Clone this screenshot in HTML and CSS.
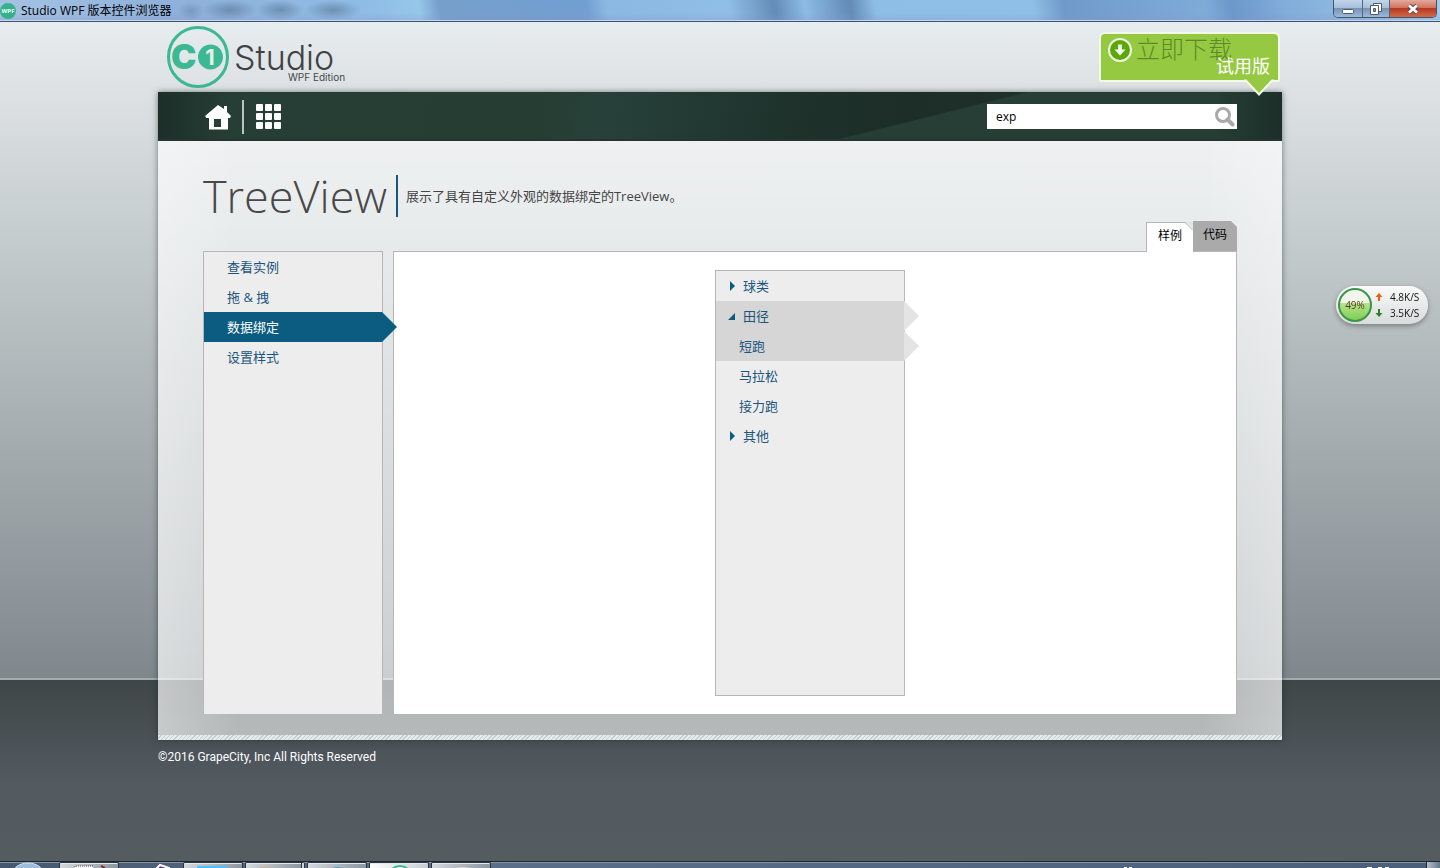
FILE: index.html
```html
<!DOCTYPE html>
<html lang="zh-CN">
<head>
<meta charset="utf-8">
<title>Studio WPF 版本控件浏览器</title>
<link rel="stylesheet" href="styles.css">
</head>
<body>
<div class="titlebar">
  <svg class="app-icon" viewBox="0 0 16 16" aria-hidden="true"><circle cx="8" cy="8" r="8" fill="#35b28a"/><text x="8" y="10" text-anchor="middle" class="app-icon-text">WPF</text></svg>
  <span class="window-title">Studio WPF 版本控件浏览器</span>
  <div class="window-controls">
    <button class="win-btn" aria-label="最小化"><svg width="14" height="14" viewBox="0 0 14 14"><rect x="1.500" y="7.500" width="11" height="4" rx="1" fill="#fff" stroke="#4d5a70"/></svg></button>
    <button class="win-btn win-restore" aria-label="还原"><svg width="14" height="14" viewBox="0 0 14 14"><path d="M4.500 1.500h8v8h-8z" fill="#fff" stroke="#4d5a70"/><path d="M1.500 3.500h8v9h-8z" fill="#fff" stroke="#4d5a70"/><path d="M4.500 6.500h2v3h-2z" fill="#7f9bc0" stroke="#4d5a70"/></svg></button>
    <button class="win-btn win-close" aria-label="关闭"><svg width="14" height="14" viewBox="0 0 14 14"><path d="M3 3.500l8 7M11 3.500l-8 7" stroke="#5c4650" stroke-width="4.800"/><path d="M3 3.500l8 7M11 3.500l-8 7" stroke="#fff" stroke-width="2.800"/></svg></button>
  </div>
</div>

<div class="stage">
  <header class="brand-row">
    <div class="brand">
      <svg class="brand-mark" width="64" height="64" viewBox="0 0 64 64" role="img" aria-label="C1">
        <circle cx="32" cy="32" r="29.500" fill="none" stroke="#3cb893" stroke-width="3"/>
        <circle cx="44.500" cy="32" r="12.500" fill="#3cb893"/>
        <text x="5" y="44" class="mark-c">C</text>
        <text x="44" y="40" text-anchor="middle" class="mark-one">1</text>
      </svg>
      <div class="brand-words">
        <span class="brand-name">Studio</span>
        <span class="brand-edition">WPF Edition</span>
      </div>
    </div>
    <a class="download" href="#">
      <svg class="download-icon" width="24" height="24" viewBox="0 0 24 24" aria-hidden="true"><circle cx="12" cy="12" r="11" fill="#5ca80a" stroke="#f1f9e2" stroke-width="2"/><path d="M10 6.500h4v5h3.500L12 17.500 6.500 11.500H10z" fill="#f4fbe8"/></svg>
      <span class="download-now">立即下载</span>
      <span class="download-trial">试用版</span>
      <svg class="download-tip" width="32" height="18" viewBox="0 0 32 18" aria-hidden="true"><path d="M1 0v1l2 0L16 15.500 29 1h2V0z" fill="#95c941"/><path d="M1 1.500h2L16 15.500 29 1.500h2" fill="none" stroke="#f3f9e8" stroke-width="2"/></svg>
    </a>
  </header>

  <div class="window-panel">
    <nav class="toolbar">
      <a class="tool-link home" href="#" aria-label="首页"><svg width="26" height="25" viewBox="0 0 26 25"><path d="M13 0L0 11l1.500 2H4v11.500h19V13h2l1-2-4-4V1h-3v3z" fill="#fff"/><path d="M9 14h7v8H9z" fill="#263e36"/></svg></a>
      <a class="tool-link" href="#" aria-label="所有控件"><svg width="25" height="25" viewBox="0 0 25 25" fill="#fff"><rect width="7" height="7" rx="1"/><rect x="9" width="7" height="7" rx="1"/><rect x="18" width="7" height="7" rx="1"/><rect y="9" width="7" height="7" rx="1"/><rect x="9" y="9" width="7" height="7" rx="1"/><rect x="18" y="9" width="7" height="7" rx="1"/><rect y="18" width="7" height="7" rx="1"/><rect x="9" y="18" width="7" height="7" rx="1"/><rect x="18" y="18" width="7" height="7" rx="1"/></svg></a>
      <form class="search">
        <input class="search-input" type="text" value="exp" aria-label="搜索">
        <button class="search-btn" type="button" aria-label="搜索"><svg width="20" height="20" viewBox="0 0 20 20" fill="none" stroke="#a9a9a9"><circle cx="8" cy="8" r="6.500" stroke-width="3"/><path d="M12.500 12.500l5 5" stroke-width="4" stroke-linecap="round"/></svg></button>
      </form>
    </nav>

    <main class="page">
      <div class="page-head">
        <h1 class="page-title">TreeView</h1>
        <p class="page-desc">展示了具有自定义外观的数据绑定的TreeView。</p>
        <div class="tabs">
          <button class="tab tab-active">样例<svg class="tab-cut" width="8" height="8" viewBox="0 0 8 8" aria-hidden="true"><path d="M0 0h8v8z" fill="#e3e6e7"/><path d="M0 .5l7.500 7.500" stroke="#b4b7b9"/></svg></button>
          <button class="tab tab-code">代码</button>
        </div>
      </div>
      <div class="columns">
        <ul class="side-list">
          <li><a class="side-link" href="#">查看实例</a></li>
          <li><a class="side-link" href="#">拖 &amp; 拽</a></li>
          <li><a class="side-link side-current" href="#">数据绑定</a></li>
          <li><a class="side-link" href="#">设置样式</a></li>
        </ul>
        <section class="sample">
          <ul class="tree">
            <li><button class="node"><svg class="node-arrow" width="8" height="10" viewBox="0 0 8 10"><path d="M2 0l5 5-5 5z" fill="#0b5c80"/></svg>球类</button></li>
            <li><button class="node node-on"><svg class="node-arrow" width="8" height="10" viewBox="0 0 8 10"><path d="M7 2v7H0z" fill="#0b5c80"/></svg>田径</button></li>
            <li><button class="node node-child node-on">短跑</button></li>
            <li><button class="node node-child">马拉松</button></li>
            <li><button class="node node-child">接力跑</button></li>
            <li><button class="node"><svg class="node-arrow" width="8" height="10" viewBox="0 0 8 10"><path d="M2 0l5 5-5 5z" fill="#0b5c80"/></svg>其他</button></li>
          </ul>
        </section>
      </div>
    </main>
  </div>

  <footer class="copyright">©2016 GrapeCity, Inc All Rights Reserved</footer>
</div>

<div class="taskbar">
  <svg class="orb" width="32" height="7" viewBox="0 0 32 7" aria-hidden="true"><ellipse cx="16" cy="15" rx="17" ry="14" fill="#9dbddb" stroke="#d5e3f0"/></svg>
  <div class="task"><svg width="60" height="6" viewBox="0 0 60 6"><path d="M15 6V3h18l2 3" fill="#f4f4f4" stroke="#555" stroke-dasharray="1 1"/><path d="M41 3l4 2" stroke="#8a3030" stroke-width="2"/></svg></div>
  <div class="task task-plain"><svg width="60" height="6" viewBox="0 0 60 6"><path d="M33 7l5-5 9 3v2" fill="#6a3584" stroke="#fff" stroke-width="2"/></svg></div>
  <div class="task"><svg width="60" height="6" viewBox="0 0 60 6"><rect x="13" y="3" width="31" height="5" rx="1" fill="#4fc0ff"/></svg></div>
  <div class="task task-stack"><svg width="60" height="6" viewBox="0 0 60 6"><path d="M14 5h12" stroke="#c9b48a" stroke-width="2"/></svg></div>
  <div class="task"><svg width="60" height="6" viewBox="0 0 60 6"><path d="M22 7q2-3 8-3l5 1v2" fill="#419fd8"/></svg></div>
  <div class="task task-current"><svg width="60" height="6" viewBox="0 0 60 6"><circle cx="30" cy="15" r="12" fill="#f4f7f6" stroke="#3cb893" stroke-width="2"/></svg></div>
  <div class="task"><svg width="60" height="6" viewBox="0 0 60 6"><path d="M23 6l8-1 8 1" fill="none" stroke="#e2dcd4" stroke-width="2"/></svg></div>
  <svg class="tray" width="300" height="7" viewBox="0 0 300 7" aria-hidden="true"><path d="M0 6h3M5 6h3M243 6h5M254 6h4M261 6h4" stroke="#fff" stroke-width="2"/></svg>
  <button class="show-desktop" aria-label="显示桌面"></button>
</div>

<aside class="net-meter">
  <div class="meter-ball">49%</div>
  <div class="meter-rates">
    <div class="rate"><svg width="8" height="8" viewBox="0 0 8 8"><path d="M4 0l3.500 4H5v4H3V4H.5z" fill="#e8611a"/></svg>4.8K/S</div>
    <div class="rate"><svg width="8" height="8" viewBox="0 0 8 8"><path d="M4 8L.5 4H3V0h2v4h2.500z" fill="#27802d"/></svg>3.5K/S</div>
  </div>
</aside>
</body>
</html>
```
FILE: styles.css
```css
* { box-sizing: border-box; }

body {
  margin: 0;
  min-height: 100vh;
  display: flex;
  flex-direction: column;
  font-family: "Open Sans", "Noto Sans CJK SC", sans-serif;
  font-size: 13px;
  color: #444;
}

ul { list-style: none; margin: 0; padding: 0; }
a { text-decoration: none; color: inherit; }
button { font: inherit; color: inherit; border: 0; background: none; padding: 0; cursor: pointer; }
svg { display: block; flex: none; }

/* Window title bar */
.titlebar {
  height: 22px;
  display: flex;
  align-items: center;
  gap: 5px;
  border-bottom: 1px solid #3c5375;
  box-shadow: inset 0 -1px #c3d7ec;
  background:
    radial-gradient(ellipse 13px 9px at 191px 11px, rgba(70, 95, 130, .3), transparent),
    radial-gradient(ellipse 28px 10px at 230px 10px, rgba(60, 80, 110, .4), transparent),
    radial-gradient(ellipse 24px 10px at 280px 10px, rgba(60, 80, 110, .4), transparent),
    radial-gradient(ellipse 28px 10px at 333px 10px, rgba(60, 80, 110, .4), transparent),
    linear-gradient(to bottom, transparent 60%, rgba(140, 150, 190, .3)),
    linear-gradient(80deg, #a5c3e4 0, #8eb0da 170px, #8fbde5 370px, #96c8ea 415px, #769fcb 435px, #719fd2 580px, #8bb8e2 600px, #8fbee6 720px, #638cb7 765px, #8cbbe5 795px, #628bb6 840px, #8ebee6 865px, #8fbfe7 1020px, #6f9aca 1050px, #7fabd9 1190px, #6b97ca 1215px, #82addb 1270px, #8db9e0 1330px, #a3cbea 100%);
}
.app-icon { width: 16px; height: 16px; }
.app-icon-text { font: 700 6px "Open Sans", sans-serif; fill: #fff; }
.window-title { font-size: 12px; line-height: 20px; color: #000; }
.window-controls {
  align-self: flex-start;
  display: flex;
  margin-left: auto;
  margin-right: 3px;
  height: 18px;
  border: 1px solid #43536b;
  border-top: 0;
  border-radius: 0 0 5px 5px;
  overflow: hidden;
}
.win-btn {
  width: 28px;
  display: grid;
  place-items: center;
  background: linear-gradient(#c3d6ea, #a5bfdc 45%, #7893b4 50%, #9db9d8);
}
.win-restore { width: 27px; border-left: 1px solid #53657f; }
.win-close { width: 47px; border-left: 1px solid #53657f; background: linear-gradient(#e4aa9c, #d2745f 45%, #b83920 50%, #cf6a4c); }

/* Backdrop with a horizon line near the bottom */
.stage {
  flex: 1;
  display: flex;
  flex-direction: column;
  padding: 0 158px;
  background: linear-gradient(to bottom,
    #e7ecee 0, #dde1e3 70px, #c9d0d2 190px, #b3babc 330px,
    #868e94 calc(100% - 220px), #7f878b calc(100% - 183px),
    #a4acaf calc(100% - 183px), #a4acaf calc(100% - 181px),
    #3e4647 calc(100% - 181px), #454d4e calc(100% - 146px),
    #4b5359 calc(100% - 115px), #535b62 calc(100% - 75px), #545c60 100%);
}

.brand-row {
  height: 70px;
  display: flex;
  justify-content: space-between;
  align-items: flex-start;
  padding: 3px 2px 0 8px;
}
.brand { display: flex; gap: 4px; }
.brand-words { display: flex; flex-direction: column; padding-top: 16px; }
.brand-name { font: 300 34px/34px Inter, sans-serif; color: #3f4245; }
.brand-edition { font: 400 10px/10px Inter, sans-serif; color: #45484b; padding-left: 54px; margin-top: -3px; }
.mark-c { font: 900 34px Inter, sans-serif; fill: #3cb893; }
.mark-one { font: 700 22px Inter, sans-serif; fill: #e2f0ec; }

.download {
  position: relative;
  width: 181px;
  height: 50px;
  margin-top: 7px;
  display: flex;
  align-items: flex-start;
  gap: 4px;
  padding: 3px 7px;
  border: 2px solid #f3f9e8;
  border-radius: 6px 6px 2px 2px;
  background: #95c941;
}
.download-icon { margin-top: 1px; }
.download-now { font-family: "Noto Sans CJK SC", sans-serif; font-size: 24px; font-weight: 300; line-height: 22px; color: #5d8a26; }
.download-trial { position: absolute; right: 8px; bottom: 2px; font-size: 18px; line-height: 24px; color: #fff; }
.download-tip { position: absolute; right: 3px; top: 45px; }

/* Main translucent panel */
.window-panel {
  flex: 1;
  display: flex;
  flex-direction: column;
  box-shadow: 0 0 6px rgba(20, 40, 35, .55);
}
.toolbar {
  height: 49px;
  display: flex;
  align-items: center;
  padding: 0 45px;
  box-shadow: inset 0 -2px #26332f;
  background:
    linear-gradient(to right, rgba(24, 40, 35, .7), transparent 70px, transparent calc(100% - 70px), rgba(24, 40, 35, .7)),
    linear-gradient(166deg, transparent 210px, #263e36 211px),
    linear-gradient(100deg, #263e36 0, #263d33 380px, #27413a 440px, #1e312b 640px, #1d2d28 750px, #20332d 900px);
}
.tool-link { display: block; }
.home { padding: 5px 11px 4px 2px; margin-right: 12px; border-right: 2px solid #b9c4c0; }
.search { display: flex; align-items: center; width: 250px; height: 25px; margin-left: auto; background: #fff; }
.search-input { flex: 1; min-width: 0; border: 0; outline: 0; padding: 0 9px; background: none; font: inherit; font-size: 12px; color: #000; }
.search-btn { padding-right: 2px; }

.page {
  flex: 1;
  display: flex;
  flex-direction: column;
  padding: 0 45px 26px;
  background:
    repeating-linear-gradient(135deg, #e6ebed 0, #e6ebed 2px, #c6cdd0 2px, #c6cdd0 3px) bottom / 100% 5px no-repeat,
    linear-gradient(to right, rgba(255, 255, 255, .25), transparent 80px, transparent calc(100% - 80px), rgba(255, 255, 255, .25)),
    rgba(255, 255, 255, .6);
}
.page-head { height: 110px; display: flex; align-items: center; }
.page-title {
  margin: 0;
  padding-right: 9px;
  border-right: 2px solid #1c557c;
  font-size: 45px;
  line-height: 42px;
  font-weight: 300;
  color: #484848;
}
.page-desc { margin: 0; padding-left: 8px; line-height: 20px; }
.tabs { align-self: flex-end; display: flex; align-items: flex-end; margin-left: auto; }
.tab { height: 30px; font-size: 12px; color: #000; }
.tab-active {
  position: relative;
  z-index: 1;
  width: 47px;
  margin-bottom: -1px;
  padding-bottom: 5px;
  border: 1px solid #b4b7b9;
  border-width: 1px 0 0 1px;
  background: #fff;
}
.tab-cut { position: absolute; right: 0; top: -1px; }
.tab-code { width: 44px; padding-bottom: 5px; background: #aaa; clip-path: polygon(0 0, 38px 0, 100% 6px, 100% 100%, 0 100%); }

.columns { flex: 1; display: flex; gap: 10px; }
.side-list { width: 180px; border: 1px solid #b4b7b9; border-bottom: 0; background: #ededed; }
.side-link { display: block; padding-left: 23px; line-height: 30px; color: #1c557c; }
.side-current { position: relative; background: #0b5c80; color: #fff; }
.side-current::after {
  content: "";
  position: absolute;
  left: 100%;
  top: 0;
  width: 15px;
  height: 30px;
  background: #0b5c80;
  clip-path: polygon(0 0, 100% 50%, 0 100%);
}
.sample {
  flex: 1;
  display: flex;
  justify-content: center;
  padding: 18px 10px 18px 0;
  border: 1px solid #b4b7b9;
  border-bottom: 0;
  background: #fff;
}
.tree { width: 190px; border: 1px solid #b4b7b9; background: #ededed; }
.node {
  position: relative;
  display: flex;
  align-items: center;
  gap: 7px;
  width: 100%;
  height: 30px;
  line-height: 30px;
  padding-left: 12px;
  text-align: left;
  color: #1c557c;
}
.node-child { padding-left: 23px; }
.node-on { background: #d6d6d6; }
.node-on::after {
  content: "";
  position: absolute;
  left: 100%;
  top: 0;
  width: 15px;
  height: 30px;
  background: #e4e4e4;
  clip-path: polygon(0 0, 100% 50%, 0 100%);
}

.copyright { height: 121px; padding-top: 7px; font-family: Roboto, sans-serif; font-size: 12px; line-height: 20px; color: #fff; }

/* Desktop taskbar, mostly below the screen edge */
.taskbar {
  height: 7px;
  display: flex;
  gap: 2px;
  overflow: hidden;
  border-top: 1px solid #1d2733;
  box-shadow: inset 0 1px #8794a4;
  background: linear-gradient(to right, #46586f, #5b6f8a 30%, #4c5f7a);
}
.orb { margin: 0 13px 0 12px; }
.task { width: 60px; border: 1px solid #2b333d; border-bottom: 0; border-radius: 2px 2px 0 0; background: linear-gradient(120deg, #d5dade, #8b959f); box-shadow: inset 0 1px #e6eaed; }
.task-plain { background: none; border-color: transparent; box-shadow: none; }
.task-stack { border-right: 4px double #2b333d; }
.task-current { background: linear-gradient(120deg, #fff, #c5cdd2); }
.tray { margin-left: auto; }
.show-desktop { width: 14px; border-left: 1px solid #1d2733; background: linear-gradient(to right, #b5bec9, #66778b); }

/* Floating network meter */
.net-meter {
  position: fixed;
  right: 12px;
  top: 286px;
  display: flex;
  align-items: center;
  gap: 3px;
  width: 92px;
  height: 38px;
  padding-left: 2px;
  border-radius: 19px;
  background: linear-gradient(#fafafa, #d9dcdc);
  box-shadow: 0 2px 5px rgba(0, 0, 0, .35);
  font-size: 10px;
  color: #111;
}
.meter-ball {
  width: 34px;
  height: 34px;
  border: 2px solid #3b9447;
  border-radius: 50%;
  text-align: center;
  line-height: 30px;
  font-size: 10px;
  color: #5a3a10;
  background: linear-gradient(#f1f6ec 45%, #b5e391 45%, #7fce50);
}
.rate { display: flex; align-items: center; gap: 7px; line-height: 16px; }
```
